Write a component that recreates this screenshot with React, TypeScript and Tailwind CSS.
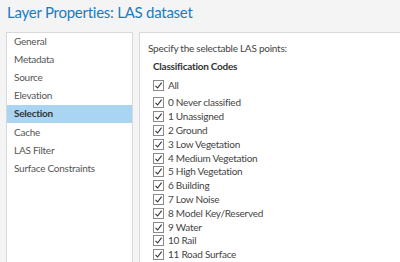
import React from 'react';

const navItems = ['General', 'Metadata', 'Source', 'Elevation', 'Selection', 'Cache', 'LAS Filter', 'Surface Constraints'];

const codes = [
  '0 Never classified',
  '1 Unassigned',
  '2 Ground',
  '3 Low Vegetation',
  '4 Medium Vegetation',
  '5 High Vegetation',
  '6 Building',
  '7 Low Noise',
  '8 Model Key/Reserved',
  '9 Water',
  '10 Rail',
  '11 Road Surface',
];

// Case cochée façon Windows
const CheckBox: React.FC = () => (
  <span className="w-[11px] h-[11px] border border-[#8a8a8a] bg-white flex items-center justify-center shrink-0">
    <svg width="9" height="9" viewBox="0 0 9 9">
      <path d="M1.5 4.8 L3.6 7 L7.6 1.6" fill="none" stroke="#333" strokeWidth="1.1" />
    </svg>
  </span>
);

const Row: React.FC<{ label: string }> = ({ label }) => (
  <div className="flex items-center gap-[4px] h-[13.8px]">
    <CheckBox />
    <span>{label}</span>
  </div>
);

const App: React.FC = () => {
  return (
    <div
      className="w-[400px] h-[262px] overflow-hidden bg-[#f4f4f4] flex flex-col"
      style={{ fontFamily: 'Lato, "Open Sans", sans-serif' }}
    >
      <div className="h-[32px] pl-[7px] pt-[2px] text-[15px] tracking-[-0.25px] text-[#1b7bc2] leading-[20px]">
        Layer Properties: LAS dataset
      </div>
      <div className="flex flex-1 gap-[6px] pl-[6px] text-[10px] tracking-[-0.25px]">
        {/* Menu de gauche */}
        <div className="w-[127px] bg-white border border-[#d9d9d9] border-b-0 text-[#555]">
          <div className="-mt-px">
            {navItems.map(item => (
              <div
                key={item}
                className={
                  item === 'Selection'
                    ? 'h-[18.2px] flex items-center pl-[7px] bg-[#a9d5f3] font-bold text-[#333]'
                    : 'h-[18.2px] flex items-center pl-[7px]'
                }
              >
                {item}
              </div>
            ))}
          </div>
        </div>

        {/* Contenu de droite */}
        <div className="flex-1 bg-white border border-[#d9d9d9] border-r-0 border-b-0 pl-[8px] pt-[7px] text-[#444]">
          <div className="h-[16px] leading-[16px]">Specify the selectable LAS points:</div>
          <div className="h-[13px] mt-[4px] pl-[5px] leading-[13px] font-bold text-[#333]">Classification Codes</div>
          <div className="pl-[5px] mt-[4px]">
            <div className="h-[17px] flex items-center gap-[4px]">
              <CheckBox />
              <span>All</span>
            </div>
            <div className="mt-[2px]">
              {codes.map(c => (
                <Row key={c} label={c} />
              ))}
            </div>
          </div>
        </div>
      </div>
    </div>
  );
};

export default App;
